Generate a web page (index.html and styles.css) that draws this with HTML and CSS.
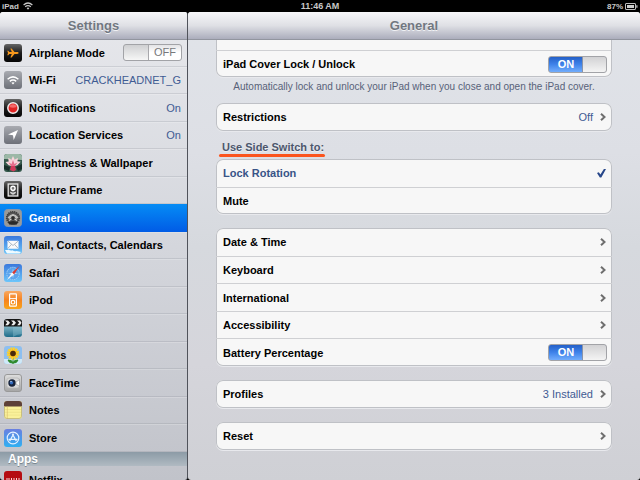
FILE: index.html
```html
<!DOCTYPE html>
<html lang="en">
	<head>
		<meta charset="UTF-8" />
		<title>Settings</title>
		<link rel="stylesheet" href="styles.css">
	</head>
	<body>
		<!-- shared gradients for the app icons -->
		<svg class="defs" width="0" height="0" aria-hidden="true">
			<defs>
				<linearGradient id="black" x2="0" y2="1"><stop offset="0" stop-color="#666" /><stop offset=".5" stop-color="#1c1c1c" /><stop offset="1" stop-color="#050505" /></linearGradient>
				<linearGradient id="gray" x2="0" y2="1"><stop offset="0" stop-color="#a9abb1" /><stop offset="1" stop-color="#6d7078" /></linearGradient>
				<linearGradient id="blue" x2="0" y2="1"><stop offset="0" stop-color="#3a78dc" /><stop offset="1" stop-color="#6cc6fb" /></linearGradient>
				<linearGradient id="orange" x2="0" y2="1"><stop offset="0" stop-color="#f9a860" /><stop offset=".5" stop-color="#f58220" /><stop offset="1" stop-color="#f9a51a" /></linearGradient>
				<linearGradient id="teal" x2="0" y2="1"><stop offset="0" stop-color="#c5e4ec" /><stop offset="1" stop-color="#1d6c8a" /></linearGradient>
				<linearGradient id="store" x2="0" y2="1"><stop offset="0" stop-color="#6a7fe0" /><stop offset="1" stop-color="#2fb0f2" /></linearGradient>
				<linearGradient id="silver" x2="0" y2="1"><stop offset="0" stop-color="#dedede" /><stop offset="1" stop-color="#a5a5a5" /></linearGradient>
			</defs>
		</svg>

		<div class="status-bar">
			<div class="status-left">
				<span>iPad</span>
				<svg width="10" height="8" viewBox="0 0 10 8" fill="none" stroke="#c8c8c8" stroke-width="1.2"><path d="M.6 3q4.4-4 8.8 0M2.2 4.8q2.8-2.4 5.6 0" /><path d="M3.6 6.1L5 7.7l1.4-1.6q-1.4-1-2.8 0z" fill="#c8c8c8" stroke="none" /></svg>
			</div>
			<time class="status-time">11:46 AM</time>
			<div class="status-right">
				<span>87%</span>
				<svg width="13" height="7" viewBox="0 0 13 7"><rect x=".5" y=".5" width="10" height="6" rx=".5" fill="none" stroke="#bbb" /><rect x="2" y="2" width="7" height="3" fill="#ccc" /><path d="M11.2 2.2h1.3v2.6h-1.3z" fill="#bbb" /></svg>
			</div>
		</div>

		<div class="panes">
			<nav class="sidebar">
				<header class="bar"><h1>Settings</h1></header>
				<div class="menu">
					<label class="item">
						<svg class="icon" viewBox="0 0 18 18"><rect width="18" height="18" rx="3" fill="url(#black)" /><path d="M14.6 9c0 .5-.6.9-1.4.9h-2.7L7.6 13.6H6.4L7.8 9.9H5.4L4.2 11.2H3.3L4 9l-.7-2.2h.9l1.2 1.3h2.4L6.4 4.4h1.2l2.9 3.7h2.7c.8 0 1.4.4 1.4.9z" fill="#f8991d" /></svg>
						<span class="name">Airplane Mode</span>
						<span class="switch"><input type="checkbox"><span class="switch-text">OFF</span></span>
					</label>
					<a class="item" href="#">
						<svg class="icon" viewBox="0 0 18 18"><rect width="18" height="18" rx="3" fill="url(#gray)" /><g fill="none" stroke="#fff" stroke-width="1.5"><path d="M3.6 8.2q5.4-4.6 10.8 0M5.8 10.4q3.2-2.6 6.4 0" /></g><path d="M7.4 11.7L9 13.6l1.6-1.9q-1.6-1.1-3.2 0z" fill="#fff" /></svg>
						<span class="name">Wi-Fi</span>
						<span class="value">CRACKHEADNET_G</span>
					</a>
					<a class="item" href="#">
						<svg class="icon" viewBox="0 0 18 18"><rect width="18" height="18" rx="3" fill="url(#black)" /><circle cx="9" cy="9" r="5.2" fill="#e02424" stroke="#ececec" stroke-width="1.5" /><path d="M5.4 8a3.7 3.7 0 0 1 7.2 0q-3.6 1.6-7.2 0z" fill="#f46a6a" /></svg>
						<span class="name">Notifications</span>
						<span class="value">On</span>
					</a>
					<a class="item" href="#">
						<svg class="icon" viewBox="0 0 18 18"><rect width="18" height="18" rx="3" fill="url(#gray)" /><path d="M14 4L9.7 14 9 9.2 4 8.6z" fill="#fff" /></svg>
						<span class="name">Location Services</span>
						<span class="value">On</span>
					</a>
					<a class="item" href="#">
						<svg class="icon" viewBox="0 0 18 18"><rect width="18" height="18" rx="3" fill="#35594c" /><path d="M0 3a3 3 0 0 1 3-3h12a3 3 0 0 1 3 3v3L0 5z" fill="#9cb8a7" /><path d="M0 11l6 2-1 4-5-2zm18-1l-6 3 2 4 4-2z" fill="#182e29" /><path d="M9 2l1.7 3.5L14 4l-.6 3.3 3.3.4-3.4 3.5-4.3 1.2-4.3-1.2L1.5 8l3.2-.6L4.2 4l3.2 1.5z" fill="#f8d3da" /><path d="M9 6l1.4 4 3-1.5L11 12H7L4.6 8.5l3 1.5z" fill="#e66f8d" /><path d="M7 12h4l1 4-2.5 1.4L6 16z" fill="#d33b5c" /></svg>
						<span class="name">Brightness &amp; Wallpaper</span>
					</a>
					<a class="item" href="#">
						<svg class="icon" viewBox="0 0 18 18"><rect width="18" height="18" rx="3" fill="url(#black)" /><rect x="4.2" y="3" width="9.6" height="12" fill="#444" stroke="#e8e8e8" stroke-width="1.3" /><circle cx="9" cy="7.3" r="2.1" fill="#777" stroke="#fff" stroke-width="1.4" /><path d="M9 10v4M9 13q-2.4.2-2.7-1.8Q8.5 11 9 13q.5-2 2.7-1.8Q11.4 13.2 9 13z" fill="#ddd" stroke="#ddd" stroke-width=".7" /></svg>
						<span class="name">Picture Frame</span>
					</a>
					<a class="item selected" href="#" aria-current="page">
						<svg class="icon" viewBox="0 0 18 18"><rect x=".5" y=".5" width="17" height="17" rx="3" fill="#9a9a98" stroke="#8796aa" /><circle cx="9" cy="9" r="6.3" fill="#555" stroke="#3d3d3d" stroke-width="1.6" stroke-dasharray="1.3 .7" /><path d="M3.5 8.5Q9 1.5 14.5 8.5L12.5 10Q9 6.5 5.5 10z" fill="#bdbdbb" /><path d="M9 10V5.5M9 9l-4 2.5M9 9l4 2.5" stroke="#d0d0cd" stroke-width="1.1" /><circle cx="9" cy="9" r="1.9" fill="#2c2c2c" /><path d="M4 13.5q5-3 10 0l-1.5 2h-7z" fill="#292929" /></svg>
						<span class="name">General</span>
					</a>
					<a class="item" href="#">
						<svg class="icon" viewBox="0 0 18 18"><rect width="18" height="18" rx="3" fill="url(#blue)" /><path d="M1 14q2 .4 3.5-.5 2 1.5 4 .7 2 1.5 4 .7l4.5 1-1.5 1.6H3z" fill="#effaff" /><rect x="3.5" y="4.7" width="11" height="8" rx=".6" fill="#fafafa" /><path d="M4 5.2l5 4.3 5-4.3M4 12.2l3.5-3.8m6.5 3.8l-3.5-3.8" fill="none" stroke="#9aa8b8" stroke-width=".8" /></svg>
						<span class="name">Mail, Contacts, Calendars</span>
					</a>
					<a class="item" href="#">
						<svg class="icon" viewBox="0 0 18 18"><rect width="18" height="18" rx="3" fill="url(#blue)" /><circle cx="9" cy="9.5" r="6.2" fill="#5ba4ed" stroke="#a8d2f7" stroke-width="1" stroke-dasharray="1.5 .8" /><path d="M9 4.5l.7 4.3 4.3.7-4.3.7-.7 4.3-.7-4.3-4.3-.7 4.3-.7z" fill="#c5e2fa" /><path d="M15.5 2L10 10.5 8 8.5z" fill="#dc3a32" /><path d="M3 16l5-7.5 2 2z" fill="#f6f7f9" /></svg>
						<span class="name">Safari</span>
					</a>
					<a class="item" href="#">
						<svg class="icon" viewBox="0 0 18 18"><rect width="18" height="18" rx="3" fill="url(#orange)" /><rect x="5.6" y="2.8" width="6.8" height="12.4" rx=".8" fill="none" stroke="#fff" stroke-width="1.2" /><path d="M6 7.6h6" stroke="#fff" /><circle cx="9" cy="11.2" r="1.8" fill="none" stroke="#fff" stroke-width="1.2" /></svg>
						<span class="name">iPod</span>
					</a>
					<a class="item" href="#">
						<svg class="icon" viewBox="0 0 18 18"><rect width="18" height="18" rx="3" fill="url(#teal)" /><path d="M9 7h9v8q-5 0-9 3z" fill="#8fc3d2" opacity=".4" /><path d="M0 3a3 3 0 0 1 3-3h12a3 3 0 0 1 3 3v4.5H0z" fill="#151515" /><path d="M1 1.5l3 .1 2 2.2-2 2.5H1.2l2-2.5zm6 0h3l2 2.3-2 2.5H7.2l2-2.5zm6 0h3l1.5 2.3L16 6.3h-2.8l2-2.5z" fill="#ececec" /></svg>
						<span class="name">Video</span>
					</a>
					<a class="item" href="#">
						<svg class="icon" viewBox="0 0 18 18"><rect width="18" height="18" rx="3" fill="#8dbff0" /><path d="M0 13h18v2a3 3 0 0 1-3 3H3a3 3 0 0 1-3-3z" fill="#cfe9f7" /><path d="M9 11v7M9 17q-4 .5-5-3 4-.5 5 3 1-3.5 5-3-1 3.5-5 3z" fill="#2f8a2c" stroke="#2f8a2c" /><circle cx="9" cy="7.5" r="4.7" fill="#f7b519" stroke="#fbd02e" stroke-width="3" stroke-dasharray="1.8 .6" /><circle cx="9" cy="7.5" r="2.8" fill="#4a2b0c" /></svg>
						<span class="name">Photos</span>
					</a>
					<a class="item" href="#">
						<svg class="icon" viewBox="0 0 18 18"><rect x=".5" y=".5" width="17" height="17" rx="2.5" fill="url(#silver)" stroke="#999" /><rect x="2.8" y="4" width="12.7" height="10" rx="2.5" fill="#d9d9d9" stroke="#b5b5b5" stroke-width=".7" /><circle cx="8" cy="9" r="3.7" fill="#17233b" /><circle cx="7.5" cy="8.8" r="1.8" fill="#326abd" /><circle cx="7" cy="7.5" r=".7" fill="#cfe1f7" /><path d="M12 8l3.5-2.3v6.6L12 10z" fill="#f8f8f8" stroke="#888" stroke-width=".5" /></svg>
						<span class="name">FaceTime</span>
					</a>
					<a class="item" href="#">
						<svg class="icon" viewBox="0 0 18 18"><rect width="18" height="18" rx="3" fill="#faf19a" /><path d="M0 3a3 3 0 0 1 3-3h12a3 3 0 0 1 3 3v2.5H0z" fill="#5d4038" /><path d="M0 8.5h18M0 11.3h18M0 14.1h18" stroke="#e8dc82" stroke-width=".6" /><path d="M3.3 5.5V18" stroke="#d9b86c" stroke-width=".6" /><path d="M.5 5v10A2.5 2.5 0 0 0 3 17.5h12a2.5 2.5 0 0 0 2.5-2.5V5" fill="none" stroke="#bcb37a" stroke-width=".8" /></svg>
						<span class="name">Notes</span>
					</a>
					<a class="item" href="#">
						<svg class="icon" viewBox="0 0 18 18"><rect width="18" height="18" rx="3" fill="url(#store)" /><circle cx="9" cy="9" r="5.8" fill="none" stroke="#e3f0ff" stroke-width="1.2" /><path d="M9.7 4.8l-4 7.2M8.3 4.8l4 7.2M4.5 10.3h9" stroke="#e8f3ff" stroke-width="1.3" /></svg>
						<span class="name">Store</span>
					</a>
				</div>
				<h2 class="menu-title">Apps</h2>
				<div class="menu">
					<a class="item" href="#">
						<svg class="icon" viewBox="0 0 18 18"><rect width="18" height="18" rx="3" fill="#b50d12" /><path d="M3 7v6M5 7v6M7.5 7v6M10 7v6M12.5 7v6M15 7v6" stroke="#f6dada" stroke-width="1" /></svg>
						<span class="name">Netflix</span>
					</a>
				</div>
			</nav>

			<main class="detail">
				<header class="bar"><h1>General</h1></header>
				<div class="content">
					<div class="group">
						<a class="row" href="#"><span class="name">Passcode Lock</span><span class="value">Off</span><svg class="arrow" viewBox="0 0 6 8"><path d="M1 .8L4.5 4 1 7.2" /></svg></a>
						<label class="row">
							<span class="name">iPad Cover Lock / Unlock</span>
							<span class="switch"><input type="checkbox" checked><span class="switch-text">ON</span></span>
						</label>
					</div>
					<p class="hint">Automatically lock and unlock your iPad when you close and open the iPad cover.</p>

					<div class="group">
						<a class="row" href="#"><span class="name">Restrictions</span><span class="value">Off</span><svg class="arrow" viewBox="0 0 6 8"><path d="M1 .8L4.5 4 1 7.2" /></svg></a>
					</div>

					<h2 class="group-title">Use Side Switch to:</h2>
					<div class="group">
						<label class="row"><span class="name">Lock Rotation</span><input class="check" type="radio" name="side-switch" checked></label>
						<label class="row"><span class="name">Mute</span><input class="check" type="radio" name="side-switch"></label>
					</div>

					<div class="group">
						<a class="row" href="#"><span class="name">Date &amp; Time</span><svg class="arrow" viewBox="0 0 6 8"><path d="M1 .8L4.5 4 1 7.2" /></svg></a>
						<a class="row" href="#"><span class="name">Keyboard</span><svg class="arrow" viewBox="0 0 6 8"><path d="M1 .8L4.5 4 1 7.2" /></svg></a>
						<a class="row" href="#"><span class="name">International</span><svg class="arrow" viewBox="0 0 6 8"><path d="M1 .8L4.5 4 1 7.2" /></svg></a>
						<a class="row" href="#"><span class="name">Accessibility</span><svg class="arrow" viewBox="0 0 6 8"><path d="M1 .8L4.5 4 1 7.2" /></svg></a>
						<label class="row">
							<span class="name">Battery Percentage</span>
							<span class="switch"><input type="checkbox" checked><span class="switch-text">ON</span></span>
						</label>
					</div>

					<div class="group">
						<a class="row" href="#"><span class="name">Profiles</span><span class="value">3 Installed</span><svg class="arrow" viewBox="0 0 6 8"><path d="M1 .8L4.5 4 1 7.2" /></svg></a>
					</div>

					<div class="group">
						<a class="row" href="#"><span class="name">Reset</span><svg class="arrow" viewBox="0 0 6 8"><path d="M1 .8L4.5 4 1 7.2" /></svg></a>
					</div>
				</div>
			</main>
		</div>
	</body>
</html>
```
FILE: styles.css
```css
* {
	box-sizing: border-box;
}
body {
	display: flex;
	flex-direction: column;
	height: 100vh;
	margin: 0;
	overflow: hidden;
	background: #000;
	font-family: "Liberation Sans", Arial, sans-serif;
	font-size: 11px;
	color: #000;
}
h1,
h2,
p {
	margin: 0;
}
a {
	color: inherit;
	text-decoration: none;
}
.defs {
	position: absolute;
}

/* status bar */
.status-bar {
	display: grid;
	grid-template-columns: 1fr auto 1fr;
	align-items: center;
	flex: none;
	height: 12px;
	padding: 0 2px;
	font-size: 8px;
	font-weight: bold;
	color: #c8c8c8;
}
.status-left,
.status-right {
	display: flex;
	align-items: center;
	gap: 4px;
}
.status-right {
	justify-content: flex-end;
	gap: 2px;
}
.status-time {
	font-size: 9px;
}

/* two panes */
.panes {
	display: flex;
	flex: 1;
	min-height: 0;
}
.sidebar,
.detail {
	overflow: hidden;
	border-radius: 3px;
}
.sidebar {
	flex: none;
	width: 188px;
	border-right: 1px solid #50535b;
	background: linear-gradient(#e7e8ec, #d6d8de 45%, #c1c3ca);
}
.detail {
	flex: 1;
	background: linear-gradient(#e1e4e9, #dddfe5 30%, #d6d9de 50%, #d5d5db 75%, #cfd0d5);
}
.bar {
	position: relative;
	display: flex;
	align-items: center;
	justify-content: center;
	height: 27px;
	background: linear-gradient(#f7f7f9, #dfe0e5 50%, #abadbc);
	box-shadow: 0 1px #92959f;
}
.bar h1 {
	font-size: 13px;
	color: #717780;
	text-shadow: 0 1px #f0f1f4;
}

/* left menu */
.item {
	display: flex;
	align-items: center;
	gap: 7px;
	height: 28px;
	padding: 0 5px 0 4px;
	border-bottom: 1px solid rgba(120, 125, 135, 0.2);
	box-shadow: 0 1px rgba(255, 255, 255, 0.2);
}
.item:nth-child(even) {
	height: 27px;
}
.item.selected {
	border-bottom-color: #015de6;
	background: linear-gradient(#058cf5, #015de6);
	color: #fff;
}
.icon {
	flex: none;
	width: 18px;
	height: 18px;
}
.name {
	flex: 1;
	font-weight: bold;
	white-space: nowrap;
}
.value {
	color: #3f5b93;
}
.item .value {
	padding-right: 1px;
}
.menu-title {
	height: 14px;
	padding-left: 8px;
	background: linear-gradient(#8c9ba6, #b0bac2);
	font-size: 12px;
	line-height: 14px;
	color: #fff;
	text-shadow: 0 1px #7b8790;
}

/* right pane */
.content {
	margin-top: -17px;
	padding: 0 28px;
}
.group {
	margin-bottom: 14px;
	border-radius: 7px;
	background: #f7f7f7;
	box-shadow: inset 0 0 0 1px #bfc1c6, 0 1px #e8e9ed;
}
.row {
	display: flex;
	align-items: center;
	height: 28px;
	padding: 0 5px 0 7px;
}
.row:nth-child(even) {
	height: 27px;
}
.row + .row {
	border-top: 1px solid #cfd0d3;
}
.row:has(.check:checked) {
	color: #385487;
}
.arrow {
	width: 6px;
	height: 8px;
	margin: 0 1px 0 7px;
	fill: none;
	stroke: #6f6f6f;
	stroke-width: 2;
}
.hint {
	margin-bottom: 7px;
	font-size: 10px;
	line-height: 18px;
	text-align: center;
	color: #586179;
}
.group:has(+ .hint) {
	margin-bottom: 1px;
}
.group-title {
	width: fit-content;
	margin: -4px 0 2px 3px;
	padding: 0 1px 0 3px;
	font-size: 11px;
	line-height: 13px;
	color: #4c566c;
	text-shadow: 0 1px #eef0f3;
}
.group-title::after {
	content: "";
	display: block;
	height: 3px;
	margin: 0 -1px 0 -3px;
	border-radius: 2px;
	background: #fb541d;
}
.check {
	width: 9px;
	height: 9px;
	margin: 0 1px 0 0;
	appearance: none;
}
.check:checked {
	background: #27478a;
	clip-path: polygon(0 50%, 20% 42%, 38% 66%, 80% 0, 100% 6%, 48% 100%, 32% 100%);
}

/* on/off switch */
.switch {
	position: relative;
	flex: none;
	width: 59px;
	height: 17px;
}
.switch input {
	display: block;
	width: 100%;
	height: 100%;
	margin: 0;
	border: 1px solid #a2a3a7;
	border-radius: 3px;
	appearance: none;
	background:
		linear-gradient(#a8a8ac, #a8a8ac) 24px 0 / 1px 100% no-repeat,
		linear-gradient(#cfd0d2, #f6f6f6) 0 0 / 24px 100% no-repeat,
		linear-gradient(#e3e3e5, #fff 50%);
}
.switch input:checked {
	background:
		linear-gradient(#8a94a8, #8a94a8) 33px 0 / 1px 100% no-repeat,
		linear-gradient(#d2d2d4, #f4f4f4) 34px 0 / 24px 100% no-repeat,
		linear-gradient(#2460c8, #3f83ea 50%, #72adfc);
}
.switch-text {
	position: absolute;
	top: 0;
	right: 0;
	width: 34px;
	line-height: 17px;
	text-align: center;
	color: #77787b;
	pointer-events: none;
}
.switch input:checked + .switch-text {
	right: auto;
	left: 1px;
	font-weight: bold;
	color: #fff;
}
```
